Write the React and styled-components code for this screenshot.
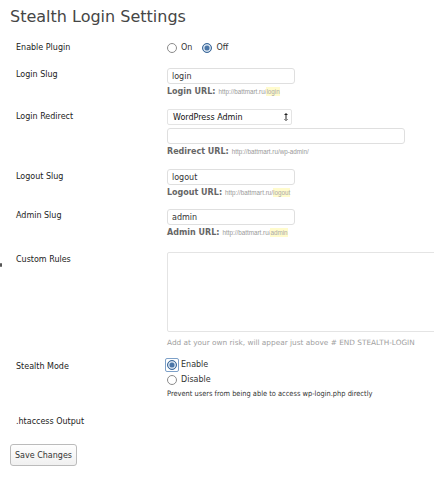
import React from 'react';
import styled, { createGlobalStyle } from 'styled-components';

const GlobalStyle = createGlobalStyle`
  body {
    margin: 0;
    background: #fff;
    font-family: "DejaVu Sans", sans-serif;
    color: #333;
  }
`

const Wrap = styled.div`
  padding: 0 0 0 10px;
  width: 424px;
  overflow: hidden;
`
const Title = styled.h2`
  margin: 0;
  padding: 6px 0 0;
  font-size: 16px;
  font-weight: normal;
  line-height: 22px;
  color: #464646;
`
const Table = styled.div`
  margin-top: 9px;
  padding-left: 6px;
`
const Row = styled.div`
  display: grid;
  grid-template-columns: 151px 1fr;
  padding-top: ${p => p.$top || 0}px;
  padding-bottom: ${p => p.$bottom || 0}px;
`
const Label = styled.div`
  font-size: 8px;
  line-height: 10px;
  color: #222;
  padding-top: ${p => p.$offset || 0}px;
`
const Field = styled.div`
  display: flex;
  flex-direction: column;
  align-items: flex-start;
  min-width: 0;
`
const Inline = styled.div`
  display: flex;
  align-items: center;
  gap: 4px;
  font-size: 8px;
  line-height: 10px;
  color: #333;
`
const Radio = styled.span`
  box-sizing: border-box;
  width: 10px;
  height: 10px;
  border-radius: 50%;
  border: 1px solid ${p => (p.$checked ? '#3d6a9b' : '#8b8b8b')};
  background: ${p => (p.$checked ? '#4a76a8' : '#fff')};
  box-shadow: ${p => (p.$checked ? 'inset 0 0 0 1.5px #d6e2ee' : 'none')};
  margin-left: ${p => p.$gapLeft || 0}px;
`
const Focus = styled.span`
  display: inline-flex;
  padding: 1px;
  border: 1px solid #7da0c8;
  border-radius: 2px;
  margin: -2px;
`
const Input = styled.input`
  box-sizing: border-box;
  width: ${p => p.$w}px;
  height: 16px;
  padding: 0 4px;
  border: 1px solid #dfdfdf;
  border-radius: 3px;
  font-family: "DejaVu Sans", sans-serif;
  font-size: 8px;
  color: #333;
  background: #fff;
  outline: none;
  margin-top: ${p => p.$mt || 0}px;
`
const Select = styled.div`
  box-sizing: border-box;
  width: 125px;
  height: 16px;
  display: flex;
  align-items: center;
  justify-content: space-between;
  padding: 0 3px 0 5px;
  border: 1px solid #e4e4e4;
  border-radius: 2px;
  font-size: 8px;
  color: #111;
  background: #fff;
`
const Arrow = styled.svg`
  width: 4px;
  height: 10px;
`
const Url = styled.div`
  margin-top: 3px;
  font-family: "Liberation Sans", Arial, sans-serif;
  font-size: 6.3px;
  line-height: 10px;
  color: #999;
  white-space: nowrap;
`
const UrlLabel = styled.b`
  font-family: "DejaVu Sans", sans-serif;
  font-size: 8px;
  color: #666;
  margin-right: 3px;
`
const Mark = styled.span`
  background: #fffbcc;
  color: #aaa;
  padding: 1px 0;
`
const Area = styled.textarea`
  box-sizing: border-box;
  width: 300px;
  height: 80px;
  border: 1px solid #e4e4e4;
  border-radius: 2px;
  resize: none;
  outline: none;
`
const Hint = styled.div`
  margin-top: 6px;
  font-size: 7.35px;
  line-height: 10px;
  color: #a0a0a0;
  white-space: nowrap;
`
const Stack = styled.div`
  display: flex;
  flex-direction: column;
  gap: 5px;
`
const Note = styled.div`
  margin-top: 4px;
  font-family: "DejaVu Sans Condensed", "Liberation Sans Narrow", "Liberation Sans", sans-serif;
  font-stretch: condensed;
  font-size: 7.4px;
  line-height: 10px;
  color: #333;
  white-space: nowrap;
`
const Button = styled.button`
  margin-top: 17px;
  height: 22px;
  padding: 0 4px;
  border: 1px solid #bbb;
  border-radius: 3px;
  background: linear-gradient(#fefefe, #f0f0f0);
  font-family: "DejaVu Sans", sans-serif;
  font-size: 8px;
  color: #333;
`
const Dot = styled.span`
  position: absolute;
  left: 0;
  top: 263px;
  width: 2px;
  height: 4px;
  background: #555;
  border-radius: 1px;
`

const UrlLine = ({ label, base, slug }) => (
  <Url>
    <UrlLabel>{label}</UrlLabel>
    {base}
    {slug && <Mark>{slug}</Mark>}
  </Url>
);

export default function App() {
  return (
    <Wrap>
      <GlobalStyle />
      <Dot />
      <Title>Stealth Login Settings</Title>
      <Table>
        <Row $top={6} $bottom={9}>
          <Label>Enable Plugin</Label>
          <Field>
            <Inline>
              <Radio />
              On
              <Radio $checked $gapLeft={6} />
              Off
            </Inline>
          </Field>
        </Row>
        <Row $top={6} $bottom={12}>
          <Label $offset={2}>Login Slug</Label>
          <Field>
            <Input $w={128} defaultValue="login" />
            <UrlLine label="Login URL:" base="http://battmart.ru/" slug="login" />
          </Field>
        </Row>
        <Row $top={0} $bottom={12}>
          <Label $offset={3}>Login Redirect</Label>
          <Field>
            <Select>
              WordPress Admin
              <Arrow viewBox="0 0 4 10">
                <path d="M0 3 L2 1 L4 3 Z M0 7 L2 9 L4 7 Z M1.5 2 h1 v6 h-1 Z" fill="#222" />
              </Arrow>
            </Select>
            <Input $w={238} $mt={3} />
            <UrlLine label="Redirect URL:" base="http://battmart.ru/wp-admin/" />
          </Field>
        </Row>
        <Row $top={0} $bottom={11}>
          <Label $offset={3}>Logout Slug</Label>
          <Field>
            <Input $w={128} defaultValue="logout" />
            <UrlLine label="Logout URL:" base="http://battmart.ru/" slug="logout" />
          </Field>
        </Row>
        <Row $top={0} $bottom={10}>
          <Label $offset={2}>Admin Slug</Label>
          <Field>
            <Input $w={128} defaultValue="admin" />
            <UrlLine label="Admin URL:" base="http://battmart.ru/" slug="admin" />
          </Field>
        </Row>
        <Row $top={4} $bottom={12}>
          <Label $offset={3}>Custom Rules</Label>
          <Field>
            <Area />
            <Hint>Add at your own risk, will appear just above # END STEALTH-LOGIN</Hint>
          </Field>
        </Row>
        <Row $top={0} $bottom={18}>
          <Label $offset={2}>Stealth Mode</Label>
          <Field>
            <Stack>
              <Inline>
                <Focus><Radio $checked /></Focus>
                Enable
              </Inline>
              <Inline>
                <Radio />
                Disable
              </Inline>
            </Stack>
            <Note>Prevent users from being able to access wp-login.php directly</Note>
          </Field>
        </Row>
        <Row>
          <Label>.htaccess Output</Label>
          <Field />
        </Row>
      </Table>
      <Button>Save Changes</Button>
    </Wrap>
  );
}
